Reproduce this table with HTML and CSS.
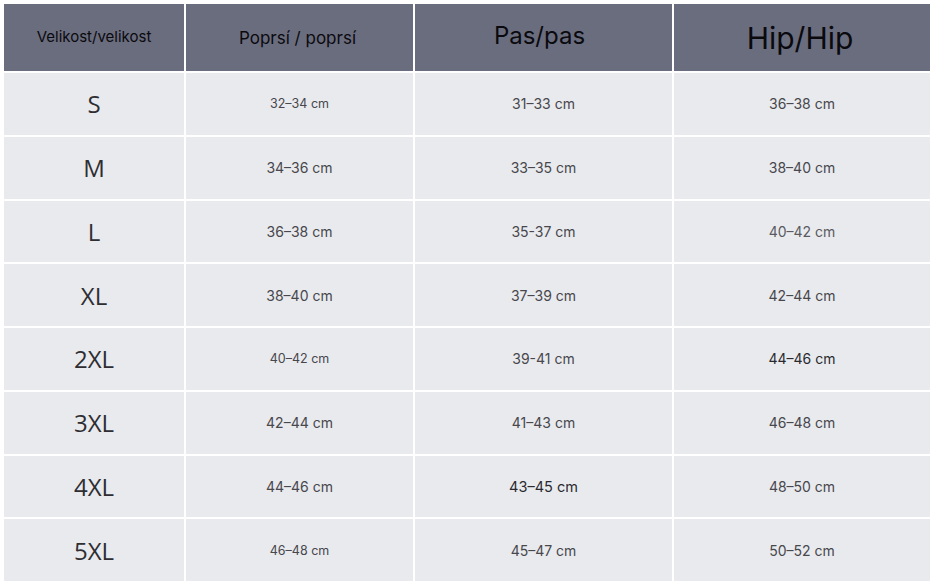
FILE: index.html
```html
<!DOCTYPE html>
<html lang="cs">
<head>
<meta charset="utf-8">
<title>Tabulka velikostí</title>
<link rel="stylesheet" href="styles.css">
</head>
<body>
<div class="table">
  <div class="cell head h1">Velikost/velikost</div>
  <div class="cell head h2">Poprsí / poprsí</div>
  <div class="cell head h3">Pas/pas</div>
  <div class="cell head h4">Hip/Hip</div>

  <div class="cell size">S</div>
  <div class="cell val sm">32–34 cm</div>
  <div class="cell val">31–33 cm</div>
  <div class="cell val">36–38 cm</div>

  <div class="cell size">M</div>
  <div class="cell val">34–36 cm</div>
  <div class="cell val">33–35 cm</div>
  <div class="cell val">38–40 cm</div>

  <div class="cell size">L</div>
  <div class="cell val">36–38 cm</div>
  <div class="cell val">35-37 cm</div>
  <div class="cell val light">40–42 cm</div>

  <div class="cell size">XL</div>
  <div class="cell val">38–40 cm</div>
  <div class="cell val">37–39 cm</div>
  <div class="cell val">42–44 cm</div>

  <div class="cell size">2XL</div>
  <div class="cell val sm">40–42 cm</div>
  <div class="cell val">39-41 cm</div>
  <div class="cell val dark">44–46 cm</div>

  <div class="cell size">3XL</div>
  <div class="cell val">42–44 cm</div>
  <div class="cell val">41–43 cm</div>
  <div class="cell val">46–48 cm</div>

  <div class="cell size">4XL</div>
  <div class="cell val">44–46 cm</div>
  <div class="cell val dark big">43–45 cm</div>
  <div class="cell val">48–50 cm</div>

  <div class="cell size">5XL</div>
  <div class="cell val sm">46–48 cm</div>
  <div class="cell val">45–47 cm</div>
  <div class="cell val">50–52 cm</div>
</div>
</body>
</html>
```

FILE: styles.css
```css
html, body {
  margin: 0;
  padding: 0;
  background: #ffffff;
}

body {
  padding: 4px;
  font-family: Inter, "Liberation Sans", sans-serif;
}

.table {
  display: grid;
  grid-template-columns: 180px 227px 257px 256px;
  grid-template-rows: 67px repeat(8, 61.75px);
  column-gap: 2px;
  row-gap: 2px;
}

.cell {
  display: flex;
  align-items: center;
  justify-content: center;
  background: #e9eaee;
  white-space: nowrap;
}

.head {
  background: #6a6d7e;
  color: #0a0a0e;
  font-family: Inter, "Liberation Sans", sans-serif;
  font-weight: 400;
}

.h1 { font-size: 15px; padding-bottom: 2px; }
.h2 { font-size: 17px; padding-right: 4px; }
.h3 { font-size: 24px; padding-bottom: 4px; padding-right: 8px; }
.h4 { font-size: 30px; padding-right: 4px; }

.size {
  font-family: "Open Sans", "DejaVu Sans", sans-serif;
  font-size: 24px;
  color: #2e2e32;
}

.val {
  font-size: 14px;
  color: #47474c;
}

.val.sm { font-size: 12.5px; }
.val.light { color: #5a5a60; }
.val.dark { color: #2a2a2e; }
.val.big { font-size: 14.5px; }
```
